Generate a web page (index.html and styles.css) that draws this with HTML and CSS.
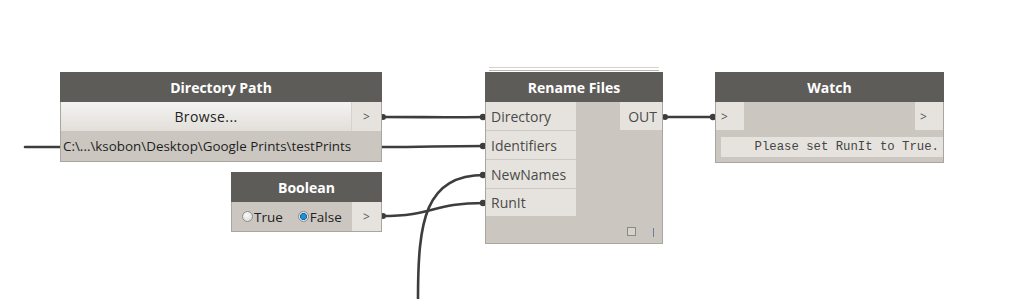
FILE: index.html
```html
<!DOCTYPE html>
<html lang="en">

<head>
    <meta charset="UTF-8">
    <title>Dynamo Graph - Rename Files</title>
    <link rel="stylesheet" href="styles.css">
</head>

<body>
    <div class="canvas">
        <!-- wires sit under the nodes -->
        <svg class="wires" width="1022" height="299" viewBox="0 0 1022 299">
            <g fill="none" stroke="#3d3d3d" stroke-width="2.6" stroke-linecap="round">
                <path d="M25 147 L60 147" />
                <path d="M381 117 C430 117, 436 117.5, 485 117" />
                <path d="M381 147 C430 147, 436 146, 485 146" />
                <path d="M381 216 C436 216, 430 203, 485 203" />
                <path d="M418 299 C418 220, 425 175, 485 175" />
                <path d="M663 117 C690 117, 690 117, 715 117" />
            </g>
            <g fill="#3d3d3d">
                <circle cx="383" cy="117" r="3" />
                <circle cx="483" cy="117" r="3.2" />
                <circle cx="483" cy="146" r="3.2" />
                <circle cx="383" cy="216" r="3" />
                <circle cx="483" cy="203" r="3.2" />
                <circle cx="483" cy="175" r="3.2" />
                <circle cx="665" cy="117" r="3" />
                <circle cx="713" cy="117" r="3.2" />
            </g>
        </svg>

        <!-- Directory Path -->
        <div class="node node-dir">
            <div class="node-header">Directory Path</div>
            <div class="row">
                <div class="browse">Browse...</div>
                <div class="port port-out">&gt;</div>
            </div>
            <div class="path-text">C:\...\ksobon\Desktop\Google Prints\testPrints</div>
        </div>

        <!-- Boolean -->
        <div class="node node-bool">
            <div class="node-header">Boolean</div>
            <div class="row">
                <div class="radios">
                    <span class="radio"></span><span class="radio-label">True</span>
                    <span class="radio checked"></span><span class="radio-label">False</span>
                </div>
                <div class="port port-out">&gt;</div>
            </div>
        </div>

        <!-- Rename Files -->
        <div class="node node-rename">
            <div class="node-header">Rename Files</div>
            <div class="rename-body">
                <div class="inputs">
                    <div class="in-port">Directory</div>
                    <div class="in-port">Identifiers</div>
                    <div class="in-port">NewNames</div>
                    <div class="in-port last">RunIt</div>
                </div>
                <div class="outputs">
                    <div class="out-port">OUT</div>
                </div>
            </div>
            <div class="node-footer">
                <span class="preview-box"></span>
                <span class="lacing"></span>
            </div>
        </div>

        <!-- Watch -->
        <div class="node node-watch">
            <div class="node-header">Watch</div>
            <div class="row watch-row">
                <div class="port">&gt;</div>
                <div class="port">&gt;</div>
            </div>
            <div class="watch-box">Please set RunIt to True.</div>
        </div>
    </div>
</body>

</html>
```

FILE: styles.css
```css
* {
    margin: 0;
    padding: 0;
    box-sizing: border-box;
}

body {
    background-color: #fff;
    font-family: "Open Sans", "Noto Sans", sans-serif;
    overflow: hidden;
}

.canvas {
    position: relative;
    width: 1022px;
    height: 299px;
}

.wires {
    position: absolute;
    left: 0;
    top: 0;
}

.node {
    position: absolute;
    background-color: #cbc7c0;
    border: 1px solid #a9a6a1;
    display: flex;
    flex-direction: column;
}

.node-header {
    height: 30px;
    flex: none;
    background-color: #5e5c59;
    color: #fff;
    font-weight: 700;
    font-size: 14px;
    display: flex;
    align-items: center;
    justify-content: center;
    margin: -1px -1px 0;
}

.row {
    display: flex;
}

.port {
    width: 29px;
    height: 29px;
    background-color: #e6e3de;
    color: #555;
    font-size: 12px;
    display: flex;
    align-items: center;
    justify-content: center;
}

/* Directory Path */
.node-dir {
    left: 60px;
    top: 72px;
    width: 322px;
    height: 90px;
}

.browse {
    flex: 1;
    height: 29px;
    background: linear-gradient(#f4f3f1, #e2dfda);
    color: #222;
    font-size: 14px;
    letter-spacing: 0.4px;
    display: flex;
    align-items: center;
    justify-content: center;
    border-right: 1px solid #d6d3ce;
}

.path-text {
    height: 29px;
    padding-left: 2px;
    font-size: 13.4px;
    color: #1e1e1e;
    display: flex;
    align-items: center;
}

/* Boolean */
.node-bool {
    left: 231px;
    top: 172px;
    width: 151px;
    height: 60px;
}

.radios {
    flex: 1;
    display: flex;
    align-items: center;
    padding-left: 10px;
    font-size: 13.5px;
    color: #222;
}

.radio {
    width: 11px;
    height: 11px;
    border-radius: 50%;
    border: 1px solid #8e8e8e;
    background: radial-gradient(circle at 40% 35%, #fafafa, #d4d4d4);
    margin-right: 1px;
}

.radio.checked {
    margin-left: 15px;
    background: radial-gradient(circle, #1d8ed8 0 2.6px, #0e5d94 3.2px, #e8e8e8 3.8px, #cfcfcf);
}

/* Rename Files */
.node-rename {
    left: 485px;
    top: 72px;
    width: 178px;
    height: 172px;
}

.node-rename::before,
.node-rename::after {
    content: "";
    position: absolute;
    left: 3px;
    right: 3px;
    height: 1px;
    background-color: #d3d1cd;
}

.node-rename::before {
    top: -6px;
}

.node-rename::after {
    top: -3px;
    background-color: #b9b6b1;
}

.rename-body {
    display: flex;
    justify-content: space-between;
}

.inputs {
    width: 90px;
}

.in-port {
    height: 29px;
    background-color: #e6e3de;
    border-bottom: 1px solid #cdcac5;
    color: #4a4a4a;
    font-size: 14px;
    display: flex;
    align-items: center;
    padding-left: 5px;
}

.in-port.last {
    height: 27px;
    border-bottom: none;
}

.out-port {
    width: 42px;
    height: 28px;
    background-color: #e6e3de;
    color: #4a4a4a;
    font-size: 14px;
    display: flex;
    align-items: center;
    justify-content: flex-end;
    padding-right: 5px;
}

.node-footer {
    margin-top: auto;
    height: 20px;
    display: flex;
    justify-content: flex-end;
    align-items: center;
    gap: 17px;
    padding-right: 8px;
    padding-bottom: 4px;
}

.preview-box {
    width: 9px;
    height: 9px;
    border: 1px solid #8b8985;
    background-color: #d6d3ce;
}

.lacing {
    width: 1px;
    height: 9px;
    background-color: #6f7d98;
    margin-top: 3px;
}

/* Watch */
.node-watch {
    left: 715px;
    top: 72px;
    width: 229px;
    height: 91px;
}

.watch-row {
    justify-content: space-between;
}

.watch-row .port {
    width: 28px;
    height: 28px;
    justify-content: flex-start;
    padding-left: 5px;
}

.watch-box {
    margin: 7px 0 0 5px;
    height: 20px;
    background-color: #e6e3de;
    font-family: "Liberation Mono", "DejaVu Sans Mono", monospace;
    font-size: 12.3px;
    color: #444;
    display: flex;
    align-items: center;
    justify-content: flex-end;
    padding-right: 4px;
}
```
